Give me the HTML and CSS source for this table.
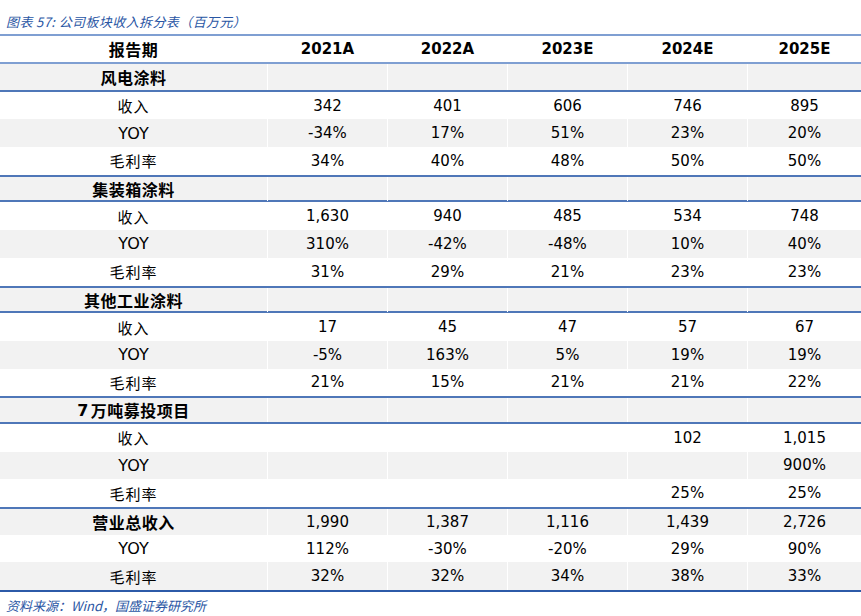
FILE: index.html
```html
<!DOCTYPE html>
<html lang="zh">
<head>
<meta charset="utf-8">
<link rel="stylesheet" href="styles.css">
</head>
<body>
<div class="page">
  <div class="title">图表 57: 公司板块收入拆分表（百万元）</div>
  <div class="table">
    <div class="row head">
      <div class="c lab b">报告期</div><div class="c">2021A</div><div class="c">2022A</div><div class="c">2023E</div><div class="c">2024E</div><div class="c">2025E</div>
    </div>
    <div class="row sec g"><div class="c lab b">风电涂料</div><div class="c"></div><div class="c"></div><div class="c"></div><div class="c"></div><div class="c"></div></div>
    <div class="row line"><div class="c lab">收入</div><div class="c">342</div><div class="c">401</div><div class="c">606</div><div class="c">746</div><div class="c">895</div></div>
    <div class="row g"><div class="c lab en">YOY</div><div class="c">-34%</div><div class="c">17%</div><div class="c">51%</div><div class="c">23%</div><div class="c">20%</div></div>
    <div class="row"><div class="c lab">毛利率</div><div class="c">34%</div><div class="c">40%</div><div class="c">48%</div><div class="c">50%</div><div class="c">50%</div></div>

    <div class="row sec g top"><div class="c lab b">集装箱涂料</div><div class="c"></div><div class="c"></div><div class="c"></div><div class="c"></div><div class="c"></div></div>
    <div class="row line"><div class="c lab">收入</div><div class="c">1,630</div><div class="c">940</div><div class="c">485</div><div class="c">534</div><div class="c">748</div></div>
    <div class="row g"><div class="c lab en">YOY</div><div class="c">310%</div><div class="c">-42%</div><div class="c">-48%</div><div class="c">10%</div><div class="c">40%</div></div>
    <div class="row"><div class="c lab">毛利率</div><div class="c">31%</div><div class="c">29%</div><div class="c">21%</div><div class="c">23%</div><div class="c">23%</div></div>

    <div class="row sec g top"><div class="c lab b">其他工业涂料</div><div class="c"></div><div class="c"></div><div class="c"></div><div class="c"></div><div class="c"></div></div>
    <div class="row line"><div class="c lab">收入</div><div class="c">17</div><div class="c">45</div><div class="c">47</div><div class="c">57</div><div class="c">67</div></div>
    <div class="row g"><div class="c lab en">YOY</div><div class="c">-5%</div><div class="c">163%</div><div class="c">5%</div><div class="c">19%</div><div class="c">19%</div></div>
    <div class="row"><div class="c lab">毛利率</div><div class="c">21%</div><div class="c">15%</div><div class="c">21%</div><div class="c">21%</div><div class="c">22%</div></div>

    <div class="row sec g top"><div class="c lab b"><span class="num">7</span> 万吨募投项目</div><div class="c"></div><div class="c"></div><div class="c"></div><div class="c"></div><div class="c"></div></div>
    <div class="row line"><div class="c lab">收入</div><div class="c"></div><div class="c"></div><div class="c"></div><div class="c">102</div><div class="c">1,015</div></div>
    <div class="row g"><div class="c lab en">YOY</div><div class="c"></div><div class="c"></div><div class="c"></div><div class="c"></div><div class="c">900%</div></div>
    <div class="row"><div class="c lab">毛利率</div><div class="c"></div><div class="c"></div><div class="c"></div><div class="c">25%</div><div class="c">25%</div></div>

    <div class="row g top"><div class="c lab b">营业总收入</div><div class="c">1,990</div><div class="c">1,387</div><div class="c">1,116</div><div class="c">1,439</div><div class="c">2,726</div></div>
    <div class="row"><div class="c lab en">YOY</div><div class="c">112%</div><div class="c">-30%</div><div class="c">-20%</div><div class="c">29%</div><div class="c">90%</div></div>
    <div class="row g last"><div class="c lab">毛利率</div><div class="c">32%</div><div class="c">32%</div><div class="c">34%</div><div class="c">38%</div><div class="c">33%</div></div>
  </div>
  <div class="source">资料来源：Wind，国盛证券研究所</div>
</div>
</body>
</html>
```
FILE: styles.css
```css
html, body {
  margin: 0;
  padding: 0;
  background: #ffffff;
}
.page {
  width: 861px;
  font-family: "DejaVu Sans", "Noto Sans CJK SC", sans-serif;
  color: #000;
}
.title {
  height: 34px;
  box-sizing: border-box;
  padding: 13px 0 0 6px;
  font-size: 13px;
  line-height: 17px;
  font-style: italic;
  letter-spacing: 0.4px;
  color: #2a56a4;
  font-family: "Noto Sans CJK SC", sans-serif;
}
.table {
  border-top: 2px solid #7f9fd2;
  border-bottom: 2px solid #2c5aa8;
}
.row {
  display: grid;
  grid-template-columns: 267px 120px 120px 120px 120px 1fr;
  height: 27.7px;
  box-sizing: border-box;
}
.row.head {
  height: 28px;
  border-bottom: 2px solid #7f9fd2;
  font-weight: bold;
}
.row.g {
  background: #f2f2f2;
}
.row.top {
  border-top: 2px solid #4f77b8;
}
.row.sec {
  border-bottom: 2px solid #4f77b8;
}
.c {
  display: flex;
  align-items: center;
  justify-content: center;
  font-size: 15px;
  border-left: 1px solid #ffffff;
  white-space: nowrap;
}
.c:first-child {
  border-left: none;
}
.lab {
  font-family: "Noto Sans CJK SC", sans-serif;
  font-size: 15px;
  letter-spacing: 1px;
}
.lab.en {
  font-family: "DejaVu Sans", sans-serif;
  font-size: 16px;
  letter-spacing: 0;
}
.lab.b {
  font-weight: bold;
  font-size: 16px;
  letter-spacing: 0.5px;
}
.num {
  font-family: "DejaVu Sans", sans-serif;
  font-weight: bold;
  margin-right: 2px;
}
.source {
  padding: 5px 0 0 6px;
  font-size: 13px;
  line-height: 17px;
  font-style: italic;
  color: #2a56a4;
  font-family: "Noto Sans CJK SC", sans-serif;
}
```
